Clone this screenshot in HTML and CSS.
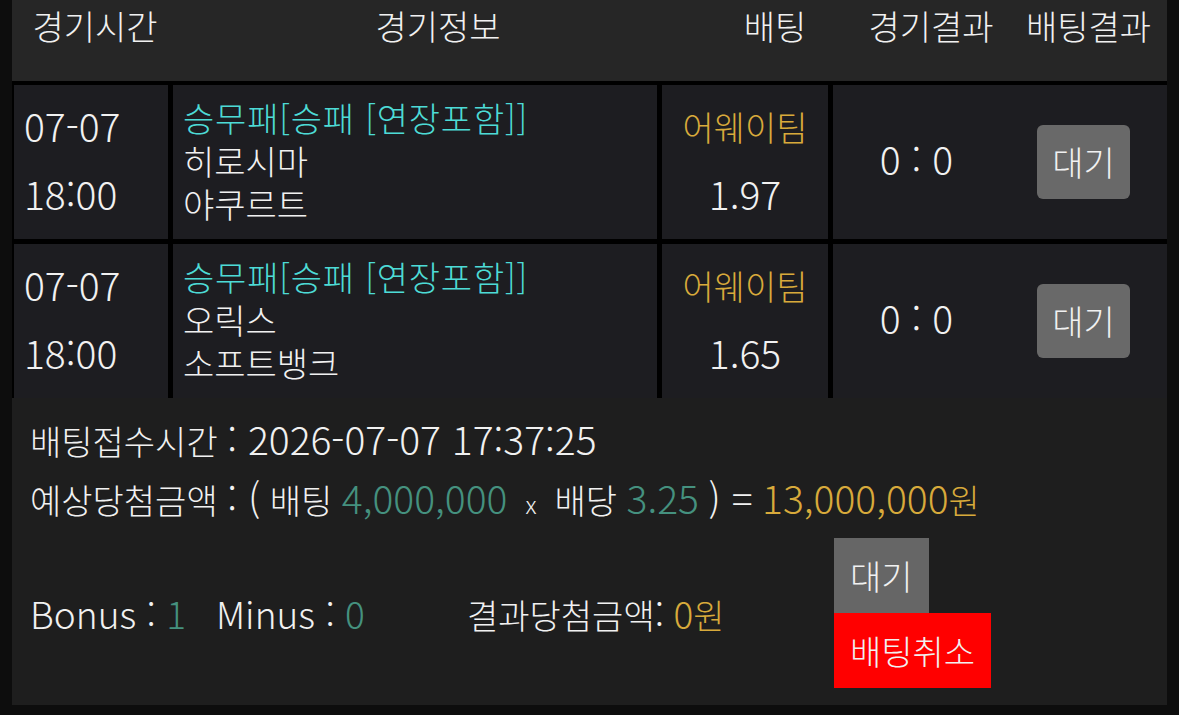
FILE: index.html
```html
<!DOCTYPE html>
<html lang="ko">
<head>
  <meta charset="UTF-8" />
  <title>배팅내역</title>
  <link rel="stylesheet" href="styles.css">
</head>
<body>
  <div class="board">
    <div class="board-head">
      <div>경기시간</div>
      <div>경기정보</div>
      <div>배팅</div>
      <div>경기결과</div>
      <div>배팅결과</div>
    </div>

    <div class="bet-row">
      <div class="cell time">
        <span class="en">07-07</span>
        <span class="en">18:00</span>
      </div>
      <div class="cell match">
        <span class="market">승무패[승패 [연장포함]]</span>
        <span>히로시마</span>
        <span>야쿠르트</span>
      </div>
      <div class="cell pick">
        <span class="team">어웨이팀</span>
        <span class="en">1.97</span>
      </div>
      <div class="cell result">
        <span class="en score">0 : 0</span>
        <span class="status">대기</span>
      </div>
    </div>

    <div class="bet-row">
      <div class="cell time">
        <span class="en">07-07</span>
        <span class="en">18:00</span>
      </div>
      <div class="cell match">
        <span class="market">승무패[승패 [연장포함]]</span>
        <span>오릭스</span>
        <span>소프트뱅크</span>
      </div>
      <div class="cell pick">
        <span class="team">어웨이팀</span>
        <span class="en">1.65</span>
      </div>
      <div class="cell result">
        <span class="en score">0 : 0</span>
        <span class="status">대기</span>
      </div>
    </div>

    <div class="summary">
      <p>배팅접수시간 <span class="en">: 2026-07-07 17:37:25</span></p>
      <p>예상당첨금액 <span class="en">: (</span> 배팅 <span class="en teal">4,000,000</span><span class="times">x</span>배당 <span class="en teal">3.25</span> <span class="en">) =</span> <span class="gold"><span class="en">13,000,000</span>원</span></p>
      <div class="summary-foot">
        <span class="en">Bonus : <span class="teal">1</span></span>
        <span class="en">Minus : <span class="teal">0</span></span>
        <span>결과당첨금액<span class="en">:</span> <span class="gold"><span class="en">0</span>원</span></span>
        <div class="actions">
          <span class="btn-wait">대기</span>
          <span class="btn-cancel">배팅취소</span>
        </div>
      </div>
    </div>
  </div>
</body>
</html>
```

FILE: styles.css
```css
body {
  margin: 0;
  background-color: #0d0d0d;
  color: #f1f1f1;
  font-family: 'Noto Sans CJK KR', 'Noto Sans', sans-serif;
  font-size: 34px;
  font-weight: 300;
}
.board {
  margin: 0 12px;
  background-color: #000;
}
.board-head {
  display: grid;
  grid-template-columns: 166px 520px 154px 158px 1fr;
  height: 81px;
  line-height: 52px;
  text-align: center;
  background-color: #262626;
  margin-bottom: 4px;
}
.bet-row {
  display: grid;
  grid-template-columns: 154px 484px 166px 1fr;
  column-gap: 5px;
  height: 154px;
  padding-left: 2px;
}
.bet-row + .bet-row {
  margin-top: 5px;
}
.cell {
  display: flex;
  flex-direction: column;
  justify-content: center;
  background-color: #1d1d21;
}
.en {
  font-size: 39px;
}
.time {
  padding-left: 10px;
  padding-bottom: 7px;
  line-height: 68px;
}
.match {
  padding-left: 10px;
  padding-bottom: 4px;
  line-height: 43px;
}
.market {
  color: #4ddbd6;
  letter-spacing: 0.8px;
}
.pick {
  align-items: center;
  padding-bottom: 5px;
  line-height: 66px;
}
.team {
  color: #d8aa3b;
}
.result {
  display: grid;
  grid-template-columns: 1fr 1fr;
  place-items: center;
}
.score {
  margin-bottom: 8px;
}
.status {
  width: 93px;
  height: 74px;
  line-height: 74px;
  text-align: center;
  border-radius: 6px;
  background-color: #696969;
}
.summary {
  background-color: #1e1e1e;
  padding: 11px 18px 17px;
}
.summary p {
  margin: 0;
  height: 59px;
  line-height: 59px;
}
.teal {
  color: #45917f;
}
.gold {
  color: #d8aa3b;
}
.times {
  font-size: 24px;
  margin: 0 18px;
}
.summary-foot {
  display: grid;
  grid-template-columns: 186px 251px 367px auto;
  align-items: center;
  margin-top: 11px;
}
.summary-foot .en {
  font-size: 37px;
}
.actions {
  display: flex;
  flex-direction: column;
  align-items: flex-start;
}
.actions span {
  height: 75px;
  line-height: 75px;
  padding: 0 16px;
}
.btn-wait {
  background-color: #666;
}
.btn-cancel {
  background-color: #f00;
}
```
